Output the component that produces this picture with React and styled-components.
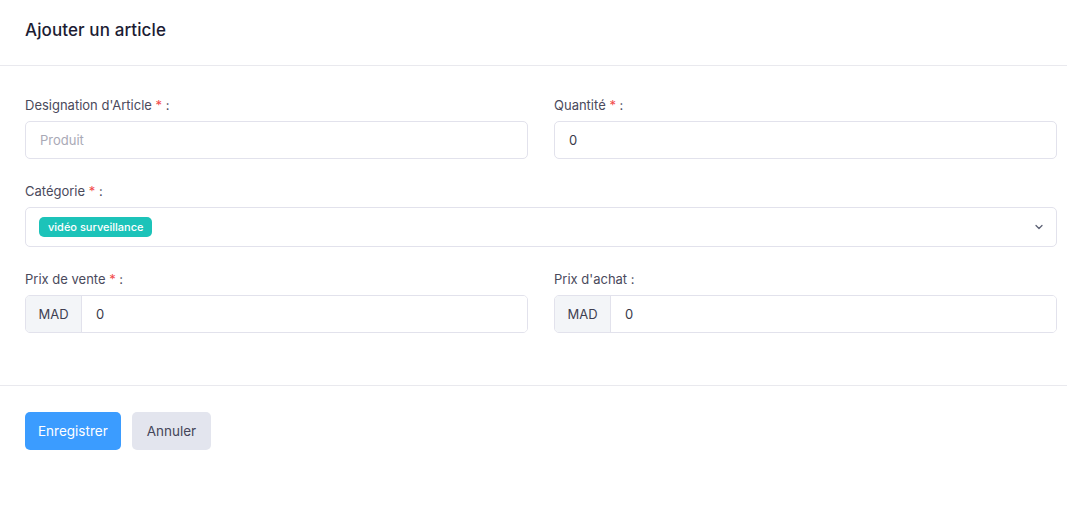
import React from 'react'
import styled, { createGlobalStyle } from 'styled-components'

const GlobalStyle = createGlobalStyle`
  * { box-sizing: border-box; }
  body {
    margin: 0;
    background: #fff;
    font-family: "Inter", "Open Sans", sans-serif;
    color: #3d3d4e;
  }
`

const Modal = styled.div`
  width: 1067px;
  background: #fff;
`

const Header = styled.div`
  height: 66px;
  padding: 0 25px 6px;
  display: flex;
  align-items: center;
  border-bottom: 1px solid #e9e9ee;
  h2 {
    margin: 0;
    font-size: 17px;
    font-weight: 450;
    color: #1c1c33;
    letter-spacing: 0.1px;
  }
`

const Body = styled.div`
  padding: 29px 10px 52px 25px;
  display: flex;
  flex-direction: column;
  gap: 22px;
  border-bottom: 1px solid #e9e9ee;
`

const Row = styled.div`
  display: grid;
  grid-template-columns: ${p => (p.$single ? '1fr' : '1fr 1fr')};
  column-gap: 26px;
`

const Field = styled.div`
  display: flex;
  flex-direction: column;
  gap: 6px;
`

const Label = styled.label`
  font-size: 13px;
  line-height: 20px;
  color: #4a4a5c;
  span {
    color: #f24a4a;
  }
`

const Input = styled.input`
  height: 38px;
  border: 1px solid #e2e2ec;
  border-radius: 5px;
  padding: 0 14px;
  font-family: inherit;
  font-size: 13px;
  color: #3a3a4a;
  outline: none;
  width: 100%;
  &::placeholder {
    color: #a9a9b6;
  }
`

const Select = styled.div`
  height: 40px;
  border: 1px solid #e2e2ec;
  border-radius: 5px;
  padding: 0 12px 0 13px;
  display: flex;
  align-items: center;
  justify-content: space-between;
`

const Tag = styled.span`
  background: #1cc3b9;
  color: #fff;
  font-size: 11px;
  font-weight: 500;
  height: 20px;
  line-height: 20px;
  padding: 0 9px;
  border-radius: 5px;
`

const Group = styled.div`
  display: flex;
  height: 38px;
  border: 1px solid #e2e2ec;
  border-radius: 5px;
  overflow: hidden;
  input {
    flex: 1;
    border: none;
    padding: 0 14px;
    font-family: inherit;
    font-size: 13px;
    color: #3a3a4a;
    outline: none;
  }
`

const Addon = styled.div`
  width: 56px;
  background: #f3f5f8;
  border-right: 1px solid #e2e2ec;
  display: flex;
  align-items: center;
  justify-content: center;
  font-size: 13px;
  color: #3f3f50;
`

const Footer = styled.div`
  padding: 26px 25px;
  display: flex;
  gap: 11px;
`

const Button = styled.button`
  height: 38px;
  padding: 0 ${p => (p.$primary ? 13 : 15)}px;
  border: none;
  border-radius: 5px;
  font-family: inherit;
  font-size: 13.5px;
  background: ${p => (p.$primary ? '#3b9cff' : '#e3e5ee')};
  color: ${p => (p.$primary ? '#fff' : '#45455a')};
`

const Chevron = () => (
  <svg width="10" height="10" viewBox="0 0 10 10" fill="none">
    <path d="M2 3.5 L5 6.5 L8 3.5" stroke="#5d6275" strokeWidth="1.3" strokeLinecap="round" strokeLinejoin="round" />
  </svg>
)

const App = () => {
  return (
    <Modal>
      <GlobalStyle />
      <Header>
        <h2>Ajouter un article</h2>
      </Header>
      <Body>
        <Row>
          <Field>
            <Label>Designation d'Article <span>*</span> :</Label>
            <Input placeholder="Produit" />
          </Field>
          <Field>
            <Label>Quantité <span>*</span> :</Label>
            <Input defaultValue="0" />
          </Field>
        </Row>
        <Row $single>
          <Field>
            <Label>Catégorie <span>*</span> :</Label>
            <Select>
              <Tag>vidéo surveillance</Tag>
              <Chevron />
            </Select>
          </Field>
        </Row>
        <Row>
          <Field>
            <Label>Prix de vente <span>*</span> :</Label>
            <Group>
              <Addon>MAD</Addon>
              <input defaultValue="0" />
            </Group>
          </Field>
          <Field>
            <Label>Prix d'achat :</Label>
            <Group>
              <Addon>MAD</Addon>
              <input defaultValue="0" />
            </Group>
          </Field>
        </Row>
      </Body>
      <Footer>
        <Button $primary>Enregistrer</Button>
        <Button>Annuler</Button>
      </Footer>
    </Modal>
  )
}

export default App
